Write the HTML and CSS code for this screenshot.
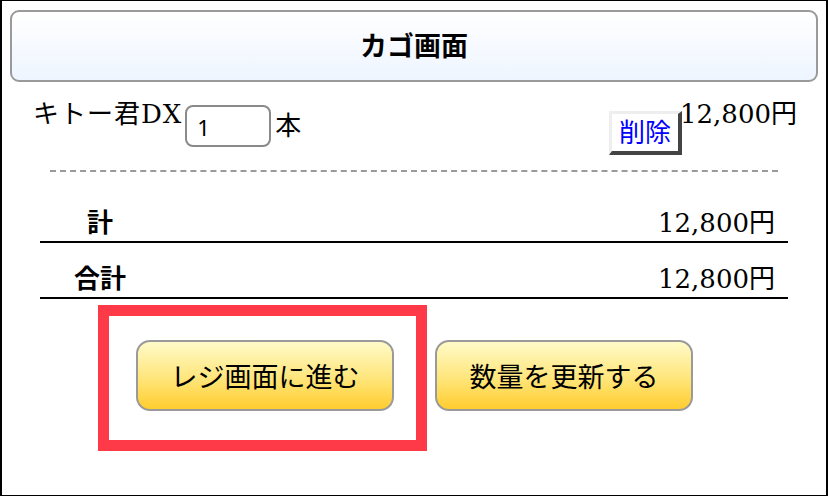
FILE: index.html
```html
<!DOCTYPE html>
<html lang="ja">
<head>
    <meta charset="UTF-8">
    <meta name="viewport" content="width=device-width, initial-scale=1.0">
    <title>カゴ画面</title>
    <link rel="stylesheet" href="styles.css">
</head>
<body>
    <div class="page">
        <h1 class="header">カゴ画面</h1>

        <div class="item">
            <span class="item-name">キトー君DX</span>
            <input class="qty" type="text" value="1">
            <span class="unit">本</span>
            <span class="spacer"></span>
            <button class="delete">削除</button>
            <span class="item-price">12,800円</span>
        </div>

        <hr class="dashed">

        <div class="totals">
            <div class="total-row">
                <span class="label">計</span>
                <span class="amount">12,800円</span>
            </div>
            <div class="total-row">
                <span class="label">合計</span>
                <span class="amount">12,800円</span>
            </div>
        </div>

        <div class="actions">
            <div class="highlight">
                <button class="action">レジ画面に進む</button>
            </div>
            <button class="action">数量を更新する</button>
        </div>
    </div>
</body>
</html>
```

FILE: styles.css
```css
* {
    margin: 0;
    padding: 0;
    box-sizing: border-box;
}

body {
    font-family: 'DejaVu Serif', 'Noto Sans CJK JP', serif;
    background: #fff;
    color: #000;
}

.page {
    height: 496px;
    border: 1px solid #000;
    border-left-width: 2px;
    border-right-width: 2px;
    padding: 9px 8px 0 8px;
}

.header {
    height: 72px;
    border: 2px solid #9a9a9a;
    border-radius: 9px;
    background: linear-gradient(to bottom, #ffffff 0%, #eef5ff 100%);
    display: flex;
    justify-content: center;
    align-items: center;
    font-size: 27px;
    font-weight: bold;
    line-height: 30px;
    padding-top: 2px;
}

.item {
    display: flex;
    align-items: flex-start;
    margin-top: 17px;
    padding: 0 21px 0 23px;
    font-size: 26px;
    line-height: 30px;
}

.item-name {
    letter-spacing: 1px;
}

.qty {
    width: 86px;
    height: 42px;
    margin: 6px 0 0 3px;
    border: 2px solid #8a8a8a;
    border-radius: 8px;
    padding: 2px 10px 0;
    font-family: 'Noto Sans', sans-serif;
    font-size: 22px;
    color: #000;
    outline: none;
}

.unit {
    margin: 12px 0 0 4px;
}

.spacer {
    flex: 1;
}

.delete {
    margin-top: 12px;
    height: 44px;
    padding: 0 7px;
    background: #fff;
    color: #0000ff;
    font-family: inherit;
    font-size: 26px;
    line-height: 30px;
    border-style: solid;
    border-width: 3px 4px 4px 3px;
    border-color: #eeeeee #444444 #444444 #eeeeee;
}

.item-price {
    margin-left: -2px;
}

.dashed {
    margin: 15px 40px 0;
    border: none;
    border-top: 2px dashed #9a9a9a;
}

.totals {
    margin: 15px 30px 0;
}

.total-row {
    display: flex;
    justify-content: space-between;
    padding: 21px 13px 3px 0;
    border-bottom: 2px solid #000;
    font-size: 26px;
    line-height: 30px;
}

.label {
    width: 120px;
    text-align: center;
    font-weight: bold;
}

.actions {
    display: flex;
    align-items: flex-start;
    gap: 8px;
    margin: 6px 0 0 88px;
}

.highlight {
    border: 11px solid #ff3a48;
    padding: 24px 22px 29px 27px;
}

.action {
    width: 258px;
    height: 71px;
    border: 2px solid #9a9a9a;
    border-radius: 14px;
    background: linear-gradient(to bottom, #fffbc8 0%, #ffe57a 55%, #ffcd2e 100%);
    font-family: inherit;
    font-size: 27px;
    color: #000;
}

.actions > .action {
    margin-top: 35px;
}
```
